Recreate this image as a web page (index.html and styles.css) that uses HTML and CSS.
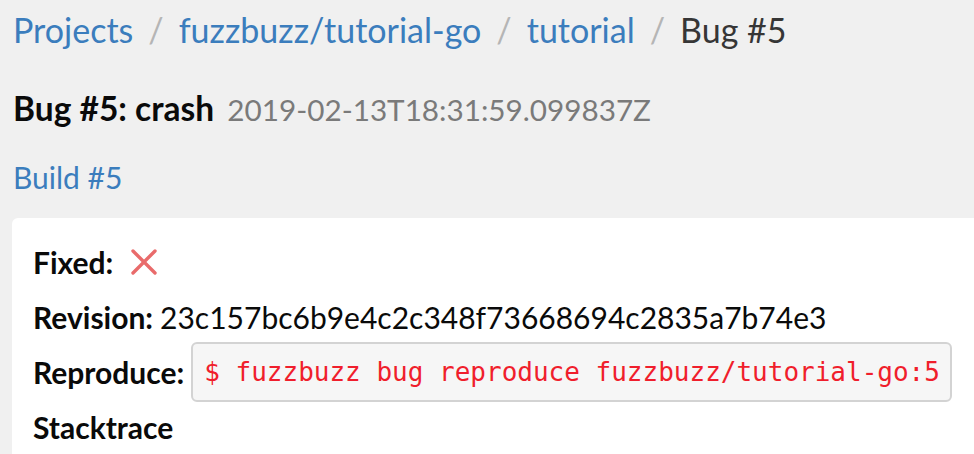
FILE: index.html
```html
<!DOCTYPE html>
<html>
<head>
<meta charset="utf-8">
<link rel="stylesheet" href="styles.css">
</head>
<body>
<nav class="breadcrumb">
  <a href="#">Projects</a><span class="sep">/</span>
  <a href="#">fuzzbuzz/tutorial-go</a><span class="sep">/</span>
  <a href="#">tutorial</a><span class="sep">/</span>
  <span class="current">Bug #5</span>
</nav>
<h1 class="title">Bug #5: crash <span class="date">2019-02-13T18:31:59.099837Z</span></h1>
<a class="build" href="#">Build #5</a>
<div class="card">
  <div class="row"><b>Fixed:</b>
    <svg class="xicon" width="28" height="28" viewBox="0 0 28 28"><path d="M3 3 L25 25 M25 3 L3 25" stroke="#e96b6b" stroke-width="3.4" stroke-linecap="round"/></svg>
  </div>
  <div class="row"><b>Revision:</b> <span>23c157bc6b9e4c2c348f73668694c2835a7b74e3</span></div>
  <div class="row"><b>Reproduce:</b> <code class="cmd">$ fuzzbuzz bug reproduce fuzzbuzz/tutorial-go:5</code></div>
  <div class="row"><b>Stacktrace</b></div>
</div>
</body>
</html>
```
FILE: styles.css
```css
html, body { margin: 0; padding: 0; }
body {
  background: #f0f0f0;
  font-family: Lato, "Open Sans", sans-serif;
  color: #0a0a0a;
  padding: 0 0 0 12px;
  overflow: hidden;
  height: 454px;
  box-sizing: border-box;
  display: flex;
  flex-direction: column;
}
a { color: #3b7dbd; text-decoration: none; }
.breadcrumb {
  display: flex;
  align-items: center;
  font-size: 34px;
  height: 58px;
  padding-left: 1px;
  flex: none;
}
.breadcrumb .sep { color: #b5b5b5; margin: 0 15px; }
.breadcrumb .current { color: #363636; }
.title {
  margin: 28px 0 0 1px;
  font-size: 33.5px;
  font-weight: 700;
  line-height: 44px;
  flex: none;
}
.title .date { font-size: 29.7px; font-weight: 400; color: #7a7a7a; margin-left: 5px; }
.build {
  display: block;
  margin: 25px 0 0 1px;
  font-size: 30px;
  line-height: 40px;
  flex: none;
  align-self: flex-start;
}
.card {
  margin-top: 21px;
  background: #fff;
  border-radius: 6px 0 0 0;
  padding: 16px 0 0 21px;
  flex: 1;
  min-height: 0;
  overflow: hidden;
}
.row {
  display: flex;
  align-items: center;
  font-size: 30px;
  height: 55px;
  gap: 7px;
}
.row b { font-weight: 700; }
.xicon { margin-left: 10px; }
.cmd {
  font-family: "DejaVu Sans Mono", "Liberation Mono", monospace;
  font-size: 26px;
  line-height: 30px;
  color: #f01e2c;
  background: #f6f6f6;
  border: 2px solid #d3d3d3;
  border-radius: 6px;
  padding: 13px 10px 13px 11px;
}
```
